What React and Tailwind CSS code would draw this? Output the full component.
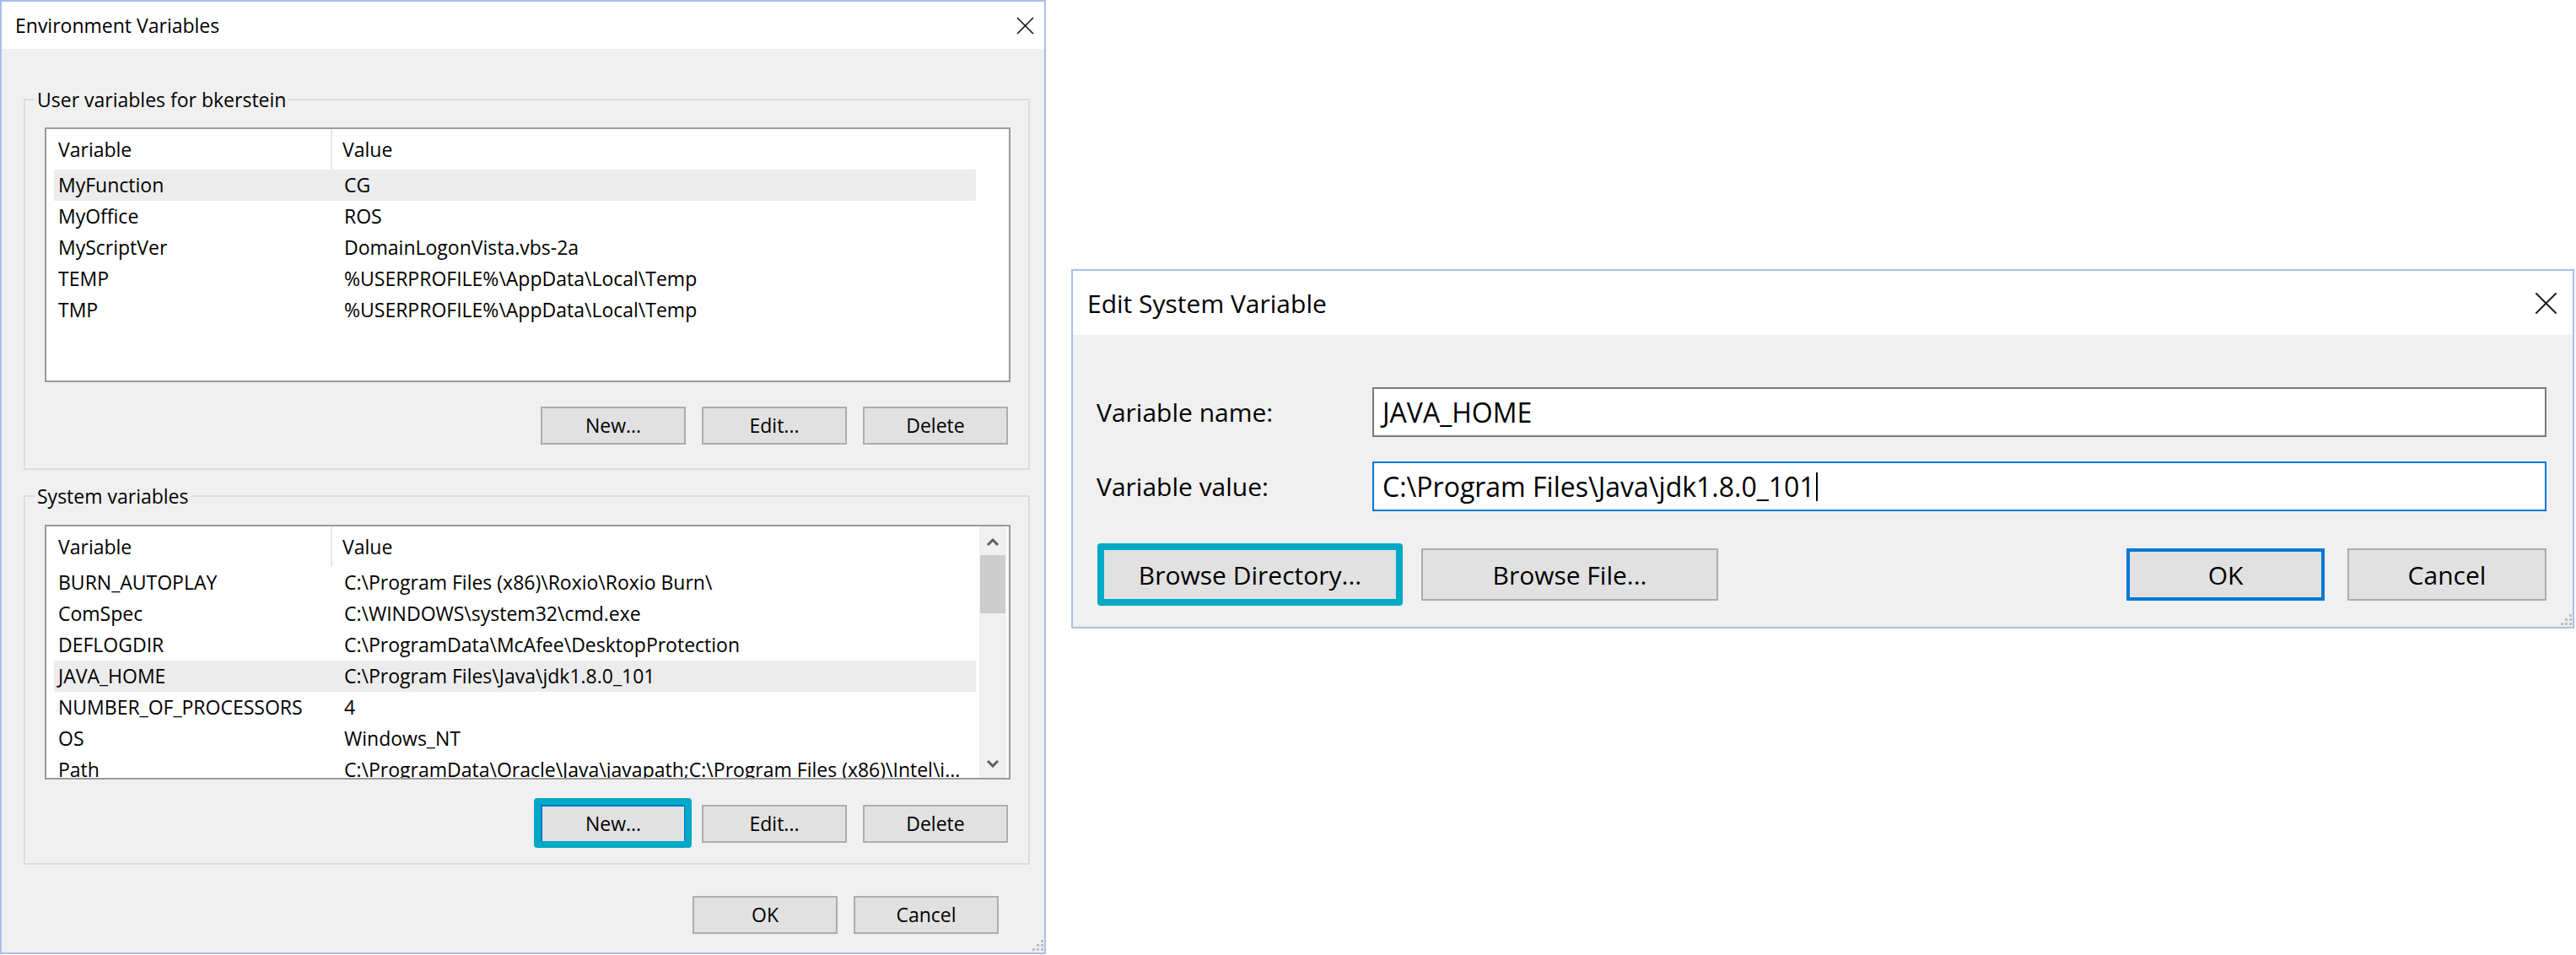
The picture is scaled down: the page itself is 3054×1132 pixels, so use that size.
import React from "react";

const userRows = [
  ["MyFunction", "CG", true],
  ["MyOffice", "ROS"],
  ["MyScriptVer", "DomainLogonVista.vbs-2a"],
  ["TEMP", "%USERPROFILE%\\AppData\\Local\\Temp"],
  ["TMP", "%USERPROFILE%\\AppData\\Local\\Temp"],
];

const sysRows = [
  ["BURN_AUTOPLAY", "C:\\Program Files (x86)\\Roxio\\Roxio Burn\\"],
  ["ComSpec", "C:\\WINDOWS\\system32\\cmd.exe"],
  ["DEFLOGDIR", "C:\\ProgramData\\McAfee\\DesktopProtection"],
  ["JAVA_HOME", "C:\\Program Files\\Java\\jdk1.8.0_101", true],
  ["NUMBER_OF_PROCESSORS", "4"],
  ["OS", "Windows_NT"],
  ["Path", "C:\\ProgramData\\Oracle\\Java\\javapath;C:\\Program Files (x86)\\Intel\\i..."],
];

function CloseX({ size }) {
  return (
    <svg width={size} height={size} viewBox="0 0 20 20" className="block">
      <line x1="1" y1="1" x2="19" y2="19" stroke="#111" strokeWidth="1.5" />
      <line x1="19" y1="1" x2="1" y2="19" stroke="#111" strokeWidth="1.5" />
    </svg>
  );
}

function Grip() {
  return (
    <svg width="13" height="15" viewBox="0 0 13 15" className="block">
      <rect x="10" y="1" width="3" height="3" fill="#bdbdbd" />
      <rect x="10" y="6" width="3" height="3" fill="#bdbdbd" />
      <rect x="5" y="6" width="3" height="3" fill="#bdbdbd" />
      <rect x="10" y="11" width="3" height="3" fill="#bdbdbd" />
      <rect x="5" y="11" width="3" height="3" fill="#bdbdbd" />
      <rect x="0" y="11" width="3" height="3" fill="#bdbdbd" />
    </svg>
  );
}

function Chevron({ up }) {
  return (
    <svg width="16" height="10" viewBox="0 0 16 10" className="block">
      <polyline
        points={up ? "2,8 8,2 14,8" : "2,2 8,8 14,2"}
        fill="none"
        stroke="#606060"
        strokeWidth="3"
      />
    </svg>
  );
}

function Btn({ children, focus, teal }) {
  return (
    <div
      className={
        "relative w-[172px] h-[45px] bg-[#e1e1e1] flex items-center justify-center text-[23px] " +
        (focus ? "border-2 border-[#0078d7]" : "border-2 border-[#adadad]")
      }
    >
      {children}
      {teal && (
        <span className="absolute -left-[10px] -right-[9px] -top-[10px] -bottom-[8px] border-[8px] border-[#00a9c5] rounded-[4px]" />
      )}
    </div>
  );
}

function VarList({ rows, scroll }) {
  return (
    <div className="h-[302px] border-2 border-[#9a9a9a] bg-white overflow-hidden flex">
      <div className="flex-1 flex flex-col overflow-hidden">
        <div className="h-[48px] flex ml-[9px] shrink-0 text-[23px]">
          <div className="w-[330px] pl-[5px] flex items-center border-r-2 border-[#e8e8e8]">Variable</div>
          <div className="pl-[12px] flex items-center">Value</div>
        </div>
        {rows.map(([k, v, sel]) => (
          <div
            key={k}
            className={
              "h-[37px] shrink-0 flex items-center ml-[9px] w-[1093px] text-[23px] whitespace-nowrap " +
              (sel ? "bg-[#ececec]" : "")
            }
          >
            <div className="w-[344px] pl-[5px]">{k}</div>
            <div>{v}</div>
          </div>
        ))}
      </div>
      {scroll && (
        <div className="w-[32px] mr-[3px] bg-[#f0f0f0] flex flex-col">
          <div className="h-[34px] flex items-center justify-center pt-[4px]">
            <Chevron up />
          </div>
          <div className="mx-[1px] h-[69px] bg-[#cdcdcd]" />
          <div className="flex-1" />
          <div className="h-[34px] flex items-center justify-center">
            <Chevron />
          </div>
        </div>
      )}
    </div>
  );
}

function Group({ title, children, className }) {
  return (
    <fieldset className={"border-2 border-[#dcdcdc] " + (className || "")}>
      <legend className="ml-[11px] px-[3px] h-[30px] leading-[30px] text-[23px]">{title}</legend>
      {children}
    </fieldset>
  );
}

function EnvDialog() {
  return (
    <div className="relative shrink-0 w-[1240px] h-[1131px] border-2 border-[#a9c0ea] bg-[#f0f0f0] flex flex-col">
      <div className="h-[56px] bg-white flex items-center justify-between pl-[16px] pr-[12px] shrink-0">
        <span className="text-[23px]">Environment Variables</span>
        <CloseX size={21} />
      </div>
      <div className="flex-1 flex flex-col pl-[26px] pr-[17px] pt-[45px]">
        <Group title="User variables for bkerstein">
          <div className="pt-[18px] pl-[23px] pr-[21px] pb-[28px]">
            <VarList rows={userRows} />
            <div className="mt-[29px] flex justify-end gap-[19px] pr-[3px]">
              <Btn>New...</Btn>
              <Btn>Edit...</Btn>
              <Btn>Delete</Btn>
            </div>
          </div>
        </Group>
        <Group title="System variables" className="mt-[16px]">
          <div className="pt-[19px] pl-[23px] pr-[21px] pb-[24px]">
            <VarList rows={sysRows} scroll />
            <div className="mt-[30px] flex justify-end gap-[19px] pr-[3px]">
              <Btn focus teal>New...</Btn>
              <Btn>Edit...</Btn>
              <Btn>Delete</Btn>
            </div>
          </div>
        </Group>
        <div className="mt-[37px] flex justify-end gap-[19px] pr-[37px]">
          <Btn>OK</Btn>
          <Btn>Cancel</Btn>
        </div>
      </div>
      <div className="absolute right-[1px] bottom-[1px]">
        <Grip />
      </div>
    </div>
  );
}

function Btn2({ children, w, focus, teal }) {
  return (
    <div
      className={
        "relative h-[62px] bg-[#e1e1e1] flex items-center justify-center text-[30px] " +
        w +
        (focus ? " border-[4px] border-[#0078d7]" : " border-2 border-[#adadad]")
      }
    >
      {children}
      {teal && (
        <span className="absolute -inset-[8px] border-[8px] border-[#00a9c5] rounded-[4px]" />
      )}
    </div>
  );
}

function EditDialog() {
  return (
    <div className="relative shrink-0 mt-[319px] ml-[30px] w-[1782px] h-[426px] border-2 border-[#a9c0ea] bg-[#f0f0f0] flex flex-col">
      <div className="h-[76px] bg-white flex items-center justify-between pl-[17px] pr-[18px] shrink-0">
        <span className="text-[30px]">Edit System Variable</span>
        <CloseX size={27} />
      </div>
      <div className="flex-1 flex flex-col pl-[28px] pr-[31px] pt-[62px]">
        <div className="flex items-center h-[59px]">
          <div className="w-[327px] text-[30px]">Variable name:</div>
          <div className="flex-1 h-[59px] border-2 border-[#7a7a7a] bg-white pl-[10px] flex items-center text-[32px]">
            JAVA_HOME
          </div>
        </div>
        <div className="flex items-center h-[59px] mt-[29px]">
          <div className="w-[327px] text-[30px]">Variable value:</div>
          <div className="flex-1 h-[59px] border-2 border-[#0078d7] bg-white pl-[10px] flex items-center text-[32px]">
            C:\Program Files\Java\jdk1.8.0_101
            <span className="inline-block w-[2px] h-[34px] bg-black ml-[1px]" />
          </div>
        </div>
        <div className="flex items-center mt-[44px] pl-[7px]">
          <Btn2 w="w-[350px]" teal>Browse Directory...</Btn2>
          <div className="ml-[28px]">
            <Btn2 w="w-[352px]">Browse File...</Btn2>
          </div>
          <div className="flex-1" />
          <Btn2 w="w-[235px]" focus>OK</Btn2>
          <div className="ml-[27px]">
            <Btn2 w="w-[236px]">Cancel</Btn2>
          </div>
        </div>
      </div>
      <div className="absolute right-[1px] bottom-[1px]">
        <Grip />
      </div>
    </div>
  );
}

export default function App() {
  return (
    <div className="w-[3054px] h-[1132px] bg-white flex items-start overflow-hidden font-['Open_Sans',sans-serif] text-black">
      <EnvDialog />
      <EditDialog />
    </div>
  );
}
